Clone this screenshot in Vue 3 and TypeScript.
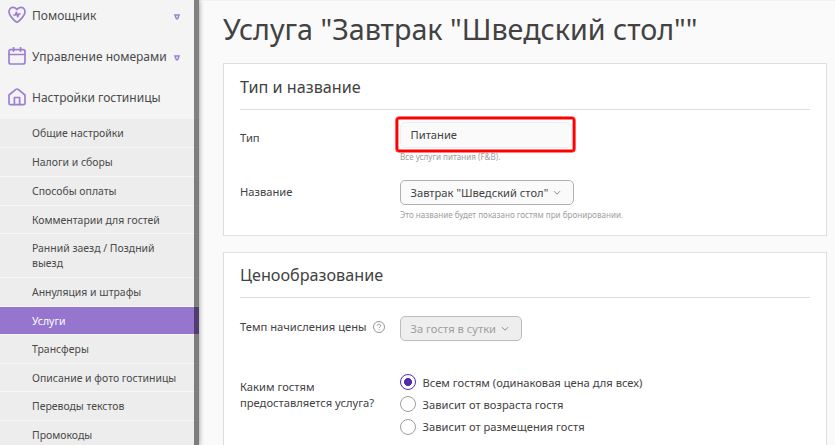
<template>
  <div class="page">
    <!-- Боковое меню -->
    <aside class="sidebar">
      <nav class="menu">
        <a v-for="item in mainMenu" :key="item.label" class="menu-item">
          <svg class="menu-icon" viewBox="0 0 18 18" width="18" height="18">
            <path v-for="d in item.paths" :key="d" :d="d" />
          </svg>
          <span class="menu-label">{{ item.label }}</span>
          <svg v-if="item.collapsed" class="menu-arrow" viewBox="0 0 6 6" width="6" height="6">
            <path d="M0.9 1h4.2L3.6 4.8H2.4z" />
          </svg>
        </a>
      </nav>
      <div class="submenu">
        <a
          v-for="label in subMenu"
          :key="label"
          class="submenu-item"
          :class="{ active: label === activeItem }"
          @click="activeItem = label"
        >
          <span class="submenu-label">{{ label }}</span>
        </a>
      </div>
      <div class="sidebar-scroll"></div>
    </aside>

    <!-- Форма услуги -->
    <main class="content">
      <h1 class="title">Услуга "Завтрак "Шведский стол""</h1>

      <section class="card card-type">
        <h2 class="card-title">Тип и название</h2>
        <div class="row row-type">
          <div class="label">Тип</div>
          <div class="field">
            <div class="readonly">Питание</div>
            <div class="hint">Все услуги питания (F&amp;B).</div>
          </div>
        </div>
        <div class="row row-name">
          <div class="label">Название</div>
          <div class="field">
            <button class="select">
              <span class="select-value">Завтрак "Шведский стол"</span>
              <svg viewBox="0 0 8 6" width="8" height="6"><path d="M1 1.2l3 3 3-3" /></svg>
            </button>
            <div class="hint">Это название будет показано гостям при бронировании.</div>
          </div>
        </div>
      </section>

      <section class="card card-price">
        <h2 class="card-title">Ценообразование</h2>
        <div class="row row-rate">
          <div class="label">
            <span class="label-text">Темп начисления цены</span>
            <svg class="help" viewBox="0 0 12 12" width="12" height="12">
              <circle cx="6" cy="6" r="5.5" />
              <path d="M4.3 4.8c0-1 .7-1.6 1.7-1.6s1.7.6 1.7 1.5c0 1.1-1.6 1.1-1.6 2.4M6.1 8.1v1" />
            </svg>
          </div>
          <div class="field">
            <button class="select disabled" disabled>
              <span class="select-value">За гостя в сутки</span>
              <svg viewBox="0 0 8 6" width="8" height="6"><path d="M1 1.2l3 3 3-3" /></svg>
            </button>
          </div>
        </div>
        <div class="row row-guests">
          <div class="label">Каким гостям предоставляется услуга?</div>
          <div class="field radios">
            <label
              v-for="option in guestOptions"
              :key="option.value"
              class="radio"
              @click="guests = option.value"
            >
              <span class="radio-mark" :class="{ checked: option.value === guests }"></span>
              <span class="radio-label">{{ option.label }}</span>
            </label>
          </div>
        </div>
      </section>
    </main>
  </div>
</template>

<script setup lang="ts">
import { ref } from 'vue'

interface MenuItem {
  label: string
  paths: string[]
  collapsed: boolean
}

interface GuestOption {
  label: string
  value: string
}

const mainMenu: MenuItem[] = [
  {
    label: 'Помощник',
    collapsed: true,
    paths: [
      'M9 16.2C7.5 16.2 1 9.6 1 5.8C1 3 2.9 1.3 5.1 1.3C6.8 1.3 8.2 2.2 9 3.5C9.8 2.2 11.2 1.3 12.9 1.3C15.1 1.3 17 3 17 5.8C17 9.6 10.5 16.2 9 16.2z',
      'M6 9h1.4l1-2.7 1.3 4.4 1-2.7h1.3'
    ]
  },
  {
    label: 'Управление номерами',
    collapsed: true,
    paths: [
      'M3 2.6h12a2 2 0 0 1 2 2v10.4a2 2 0 0 1-2 2H3a2 2 0 0 1-2-2V4.6a2 2 0 0 1 2-2z',
      'M1 7.5h16M5.5 .6v3.6M12.5 .6v3.6'
    ]
  },
  {
    label: 'Настройки гостиницы',
    collapsed: false,
    paths: [
      'M1 7l6.9-5.6q1.1-.8 2.2 0L17 7v8.2a1.5 1.5 0 0 1-1.5 1.5h-13A1.5 1.5 0 0 1 1 15.2z',
      'M6.4 16.5V9.5h5.2v7'
    ]
  }
]

const subMenu: string[] = [
  'Общие настройки',
  'Налоги и сборы',
  'Способы оплаты',
  'Комментарии для гостей',
  'Ранний заезд / Поздний выезд',
  'Аннуляция и штрафы',
  'Услуги',
  'Трансферы',
  'Описание и фото гостиницы',
  'Переводы текстов',
  'Промокоды'
]

const guestOptions: GuestOption[] = [
  { label: 'Всем гостям (одинаковая цена для всех)', value: 'all' },
  { label: 'Зависит от возраста гостя', value: 'age' },
  { label: 'Зависит от размещения гостя', value: 'placement' }
]

const activeItem = ref('Услуги')
const guests = ref('all')
</script>

<style>
body {
  background: #fafafa;
}
</style>

<style scoped>
.page {
  display: flex;
  width: 835px;
  height: 445px;
  overflow: hidden;
  background: #fafafa;
  color: #424242;
  font-family: 'Noto Sans', sans-serif;
  font-size: 11.18px;
}

.sidebar {
  position: relative;
  flex: none;
  width: 199px;
  height: 445px;
  background: #f4f4f4;
  color: #4a4a4a;
  box-shadow: 0 0 5px rgba(0, 0, 0, 0.45);
}

.menu {
  height: 119px;
}

.menu-item {
  display: flex;
  align-items: center;
  height: 41px;
  padding: 0 19.5px 0 7.5px;
  font-size: 13px;
}

.menu-item:first-child {
  height: 30px;
}

.menu-item:nth-child(2) {
  height: 52px;
}

.menu-item:nth-child(3) {
  height: 30px;
}

.menu-icon {
  flex: none;
  margin-right: 6.5px;
  fill: none;
  stroke: #9c7fd2;
  stroke-width: 1.7;
  stroke-linecap: round;
  stroke-linejoin: round;
}

/* узкое начертание подписей меню */
.menu-label {
  width: 138px;
  transform: scaleX(0.925);
  transform-origin: 0 50%;
  white-space: nowrap;
}

.menu-arrow {
  flex: none;
  margin-top: 3px;
  margin-left: auto;
  fill: none;
  stroke: #9c7fd2;
  stroke-width: 1.4;
}

.submenu {
  display: grid;
  grid-template-rows: 29px 29px 29px 28px 44px 29px 28px 29px 28px 29px 29px;
  height: 326px;
  overflow: hidden;
  background: #ededed;
}

.submenu-item {
  display: flex;
  align-items: center;
  padding: 0 0 1px 32px;
  border-bottom: 1px solid #f6f6f6;
  font-size: 11px;
  line-height: 15px;
  cursor: pointer;
}

.submenu-item.active {
  background: #9575cd;
  color: #ffffff;
}

.submenu-label {
  width: 159px;
  transform: scaleX(0.95);
  transform-origin: 0 50%;
}

.sidebar-scroll {
  position: absolute;
  top: 0;
  right: 0;
  width: 5px;
  height: 445px;
  background: rgba(0, 0, 0, 0.47);
}

.content {
  flex: 1;
  padding: 0 8px 0 24px;
  border-top: 1px solid #f2f2f2;
}

.title {
  height: 62px;
  margin: 0;
  font-size: 28.7px;
  font-weight: 400;
  line-height: 56px;
  white-space: nowrap;
}

.card {
  box-sizing: border-box;
  padding: 0 16px;
  border: 1px solid #dedede;
  background: #ffffff;
}

.card-type {
  height: 173px;
  margin-bottom: 16px;
}

.card-price {
  height: 220px;
}

.card-title {
  height: 45px;
  margin: 0;
  border-bottom: 1px solid #dedede;
  font-size: 16.2px;
  font-weight: 400;
  line-height: 46px;
}

.card-price .card-title {
  height: 44px;
  line-height: 44px;
}

.row {
  display: flex;
}

.label {
  flex: none;
  width: 160px;
  line-height: 16px;
}

.field {
  flex: 1;
}

.row-type {
  height: 58px;
  padding-top: 12px;
}

.row-type .label {
  padding-top: 8px;
}

.readonly {
  position: relative;
  box-sizing: border-box;
  width: 172px;
  height: 26px;
  padding-left: 9.5px;
  border: 1px solid #eeeeee;
  border-radius: 5px;
  background: #fafafa;
  line-height: 24px;
}

/* красная рамка вокруг поля типа */
.readonly::after {
  content: '';
  position: absolute;
  top: -6px;
  left: -5px;
  width: 175px;
  height: 31px;
  border: 2px solid #ff0000;
  border-radius: 3px;
  box-shadow: 0 0 0 0.6px #ff0000, inset 0 0 0 0.4px #ff0000;
}

.hint {
  color: #9e9e9e;
  font-size: 8.08px;
  line-height: 12px;
  white-space: nowrap;
}

.row-type .hint {
  margin-top: 3px;
}

.row-name .label {
  padding-top: 4px;
}

.row-name .hint {
  margin-top: 4px;
}

.select {
  display: flex;
  align-items: center;
  box-sizing: border-box;
  width: 174px;
  height: 25px;
  padding: 0 9.5px;
  border: 1px solid #b0b0b0;
  border-radius: 5px;
  background: #fafafa;
  color: #424242;
  font-family: inherit;
  font-size: 11.18px;
  white-space: nowrap;
}

.select svg {
  margin-left: 5px;
  fill: none;
  stroke: #8a8a8a;
  stroke-width: 1;
}

.select.disabled {
  width: 122px;
  border-color: #bdbdbd;
  background: #eeeeee;
  color: #9e9e9e;
}

.row-rate {
  height: 55px;
  padding-top: 18px;
}

.row-rate .label {
  display: flex;
  align-items: center;
  height: 22px;
}

.help {
  margin-left: 6.5px;
  fill: none;
  stroke: #8a8a8a;
  stroke-width: 0.9;
}

.row-guests .label {
  padding-top: 8px;
}

.radio {
  display: flex;
  align-items: center;
  height: 22.3px;
  cursor: pointer;
}

.radio-mark {
  box-sizing: border-box;
  width: 16px;
  height: 16px;
  margin-right: 6.5px;
  border: 1px solid #9e9e9e;
  border-radius: 50%;
  background: #ffffff;
}

.radio-mark.checked {
  border-color: #512da8;
  background: radial-gradient(circle, #512da8 3.7px, #ffffff 4.3px);
}
</style>
